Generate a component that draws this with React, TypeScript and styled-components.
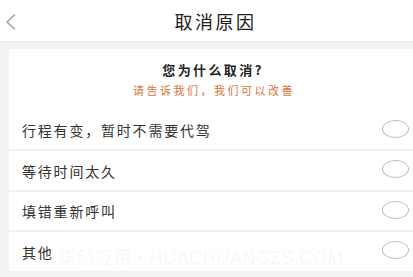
import React from "react";
import styled, { createGlobalStyle } from "styled-components";

const Global = createGlobalStyle`
  html, body { margin: 0; padding: 0; background: #f3f3f3; }
  body { font-family: "Noto Sans CJK SC", "Liberation Sans", sans-serif; }
  * { box-sizing: border-box; }
`;

const Page = styled.div`
  position: relative;
  width: 413px;
  height: 277px;
  overflow: hidden;
  background: #f3f3f3;
`;

const Header = styled.div`
  height: 42px;
  background: #fff;
  border-bottom: 1px solid #ececec;
  display: flex;
  align-items: center;
  justify-content: center;
  position: relative;
`;

const Back = styled.button`
  position: absolute;
  left: 2px;
  top: 11px;
  width: 18px;
  height: 22px;
  border: none;
  background: none;
  padding: 0;
  display: flex;
  align-items: center;
  justify-content: center;
`;

const Title = styled.h1`
  margin: 0;
  font-size: 18px;
  font-weight: 400;
  letter-spacing: 2.5px;
  color: #222;
  padding-left: 18px;
  margin-top: 1px;
`;

const Body = styled.div`
  padding: 7px 0 0 9px;
`;

const Card = styled.div`
  background: #fff;
`;

const CardHead = styled.div`
  padding: 12px 0 12.5px;
  display: flex;
  flex-direction: column;
  align-items: center;
  gap: 3px;
`;

const Question = styled.div`
  font-size: 13px;
  line-height: 18px;
  font-weight: 700;
  letter-spacing: 2.4px;
  color: #222;
  padding-left: 4px;
`;

const Hint = styled.div`
  font-size: 11px;
  line-height: 16px;
  letter-spacing: 2.5px;
  color: #d8743a;
  padding-left: 6px;
`;

const Row = styled.div`
  height: 40.5px;
  border-bottom: 2px solid #f1f1f1;
  display: flex;
  align-items: center;
  justify-content: space-between;
  padding: 0 4px 0 13px;
`;

const Label = styled.span`
  font-size: 14px;
  letter-spacing: 1.8px;
  color: #333;
  margin-top: 1px;
`;

const Radio = styled.span`
  width: 27px;
  height: 18px;
  border: 1px solid #b9b9b9;
  border-radius: 50%;
  margin-top: -2px;
`;

const Watermark = styled.div`
  position: absolute;
  left: 58px;
  top: 243px;
  font-size: 18px;
  letter-spacing: 0.5px;
  color: rgba(240, 160, 200, 0.13);
  font-family: "Liberation Sans", "Noto Sans CJK SC", sans-serif;
  pointer-events: none;
  white-space: nowrap;
`;

const reasons = ["行程有变，暂时不需要代驾", "等待时间太久", "填错重新呼叫", "其他"];

export default function App() {
  return (
    <Page>
      <Global />
      <Header>
        <Back aria-label="返回">
          <svg width="14" height="18" viewBox="0 0 14 18">
            <path d="M11 1.5 L3 9 L11 16.5" fill="none" stroke="#9a9a9a" strokeWidth="1.3" />
          </svg>
        </Back>
        <Title>取消原因</Title>
      </Header>
      <Body>
        <Card>
          <CardHead>
            <Question>您为什么取消?</Question>
            <Hint>请告诉我们，我们可以改善</Hint>
          </CardHead>
          {reasons.map((r) => (
            <Row key={r}>
              <Label>{r}</Label>
              <Radio />
            </Row>
          ))}
        </Card>
      </Body>
      <Watermark>华创应用 • HUACHUANGZS.COM</Watermark>
    </Page>
  );
}
